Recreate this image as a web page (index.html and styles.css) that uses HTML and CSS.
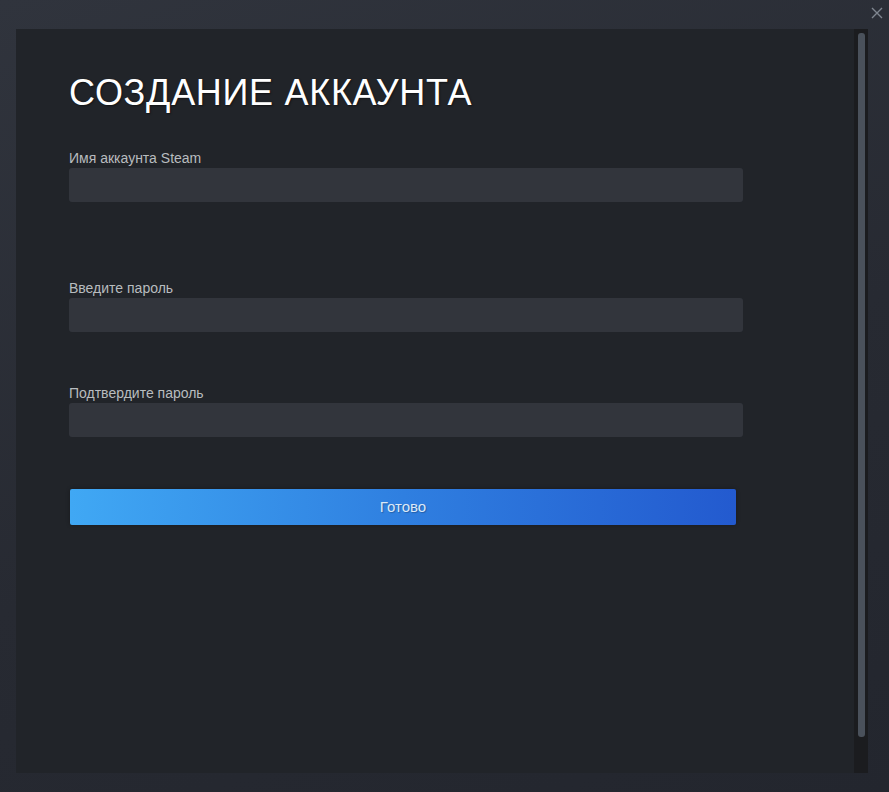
FILE: index.html
```html
<!DOCTYPE html>
<html lang="ru">
<head>
  <meta charset="UTF-8">
  <meta name="viewport" content="width=device-width, initial-scale=1.0">
  <title>Создание аккаунта</title>
  <link rel="stylesheet" href="styles.css">
</head>
<body>

<div class="topbar">
  <button class="close" type="button" aria-label="Закрыть">
    <svg width="12" height="12" viewBox="0 0 12 12"><path d="M1 1 L11 11 M11 1 L1 11" stroke="#7f8690" stroke-width="1.4" fill="none"/></svg>
  </button>
</div>

<div class="panel">
  <form class="content" id="createForm">
    <h1>Создание аккаунта</h1>

    <label for="account" class="first">Имя аккаунта Steam</label>
    <input type="text" id="account" name="account">

    <label for="password" class="second">Введите пароль</label>
    <input type="password" id="password" name="password">

    <label for="confirm" class="third">Подтвердите пароль</label>
    <input type="password" id="confirm" name="confirm">

    <button type="submit" class="done">Готово</button>
  </form>

  <div class="track"><div class="thumb"></div></div>
</div>

</body>
</html>
```

FILE: styles.css
```css
html, body { height: 100%; }
body { margin: 0; display: flex; flex-direction: column; font-family: Arial, "Liberation Sans", sans-serif; background: linear-gradient(160deg, #30343d 0%, #272a32 55%, #23262e 100%); }

.topbar { height: 29px; display: flex; justify-content: flex-end; align-items: flex-start; padding-right: 6px; }
.close { background: none; border: none; padding: 0; margin-top: 7px; width: 12px; height: 12px; cursor: pointer; display: block; }
.close svg { display: block; }

.panel { flex: 1; display: flex; margin: 0 21px 19px 16px; background: #212429; }
.content { flex: 1; padding: 46px 0 0 53px; display: flex; flex-direction: column; align-items: flex-start; }

h1 { margin: 0; font-size: 36px; line-height: 36px; font-weight: normal; color: #ffffff; text-transform: uppercase; letter-spacing: 0.7px; text-shadow: 1px 1px 2px rgba(0, 0, 0, 0.45); }

label { display: block; font-size: 14px; line-height: 16px; color: #b8bcbf; margin-bottom: 2px; }
label.first { margin-top: 39px; }
label.second { margin-top: 78px; }
label.third { margin-top: 53px; }

input { width: 674px; height: 34px; box-sizing: border-box; border: none; border-radius: 3px; background: #32353c; color: #fff; padding: 0 10px; font-size: 15px; outline: none; }

.done { margin: 52px 0 0 1px; padding: 0 0 2px; width: 666px; height: 36px; border: none; border-radius: 2px; background: linear-gradient(to right, #40a8f4 0%, #2f7fe0 50%, #235acf 100%); color: #dce9f8; font-family: inherit; font-size: 15px; cursor: pointer; text-shadow: 1px 1px 1px rgba(0, 0, 0, 0.25); box-shadow: 0 0 4px rgba(0, 0, 0, 0.3); }

.track { width: 14px; background: #1b1c1f; padding: 4px 0 0 4px; box-sizing: border-box; }
.thumb { width: 7px; height: 704px; background: #4a515b; border-radius: 3px; }
```
